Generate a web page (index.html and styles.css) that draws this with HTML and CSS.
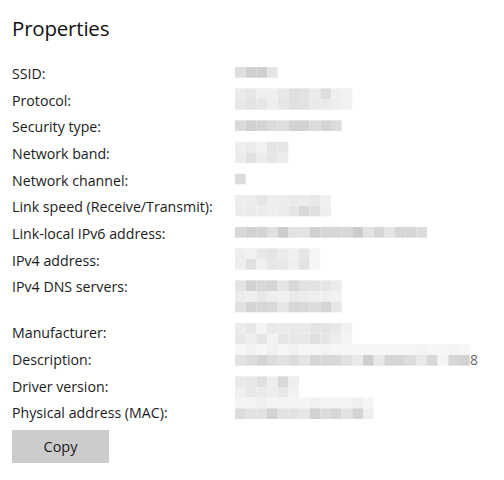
FILE: index.html
```html
<!DOCTYPE html>
<html lang="en">
<head>
<meta charset="utf-8">
<title>Properties</title>
<link rel="stylesheet" href="styles.css">
</head>
<body>
<main class="panel">
  <h1 class="title">Properties</h1>
  <div class="props">
    <dl class="list">
      <dt>SSID:</dt><dd></dd>
      <dt>Protocol:</dt><dd></dd>
      <dt>Security type:</dt><dd></dd>
      <dt>Network band:</dt><dd></dd>
      <dt>Network channel:</dt><dd></dd>
      <dt>Link speed (Receive/Transmit):</dt><dd></dd>
      <dt>Link-local IPv6 address:</dt><dd></dd>
      <dt>IPv4 address:</dt><dd></dd>
      <dt>IPv4 DNS servers:</dt><dd class="multi"><span class="line"></span><span class="line"></span></dd>
      <dt>Manufacturer:</dt><dd></dd>
      <dt>Description:</dt><dd class="desc"><span class="redacted"></span>8</dd>
      <dt>Driver version:</dt><dd></dd>
      <dt>Physical address (MAC):</dt><dd></dd>
    </dl>
    <svg class="mosaic" viewBox="0 0 22 33" width="234.67" height="352" aria-hidden="true">
      <g transform="translate(0 0)">
        <rect class="c" x="0" fill="#dedede"/><rect class="c" x="1" fill="#d0d0d0"/><rect class="c" x="2" fill="#cfcfcf"/><rect class="c" x="3" fill="#e4e4e4"/>
      </g>
      <g transform="translate(0 2)">
        <rect class="c" x="0" fill="#ebebeb"/><rect class="c" x="1" fill="#e6e6e6"/><rect class="c" x="2" fill="#efefef"/><rect class="c" x="3" fill="#f0f0f0"/><rect class="c" x="4" fill="#e8e8e8"/><rect class="c" x="5" fill="#e0e0e0"/><rect class="c" x="6" fill="#e2e2e2"/><rect class="c" x="7" fill="#ececec"/><rect class="c" x="8" fill="#dedede"/><rect class="c" x="9" fill="#efefef"/><rect class="c" x="10" fill="#f2f2f2"/>
      </g>
      <g transform="translate(0 3)">
        <rect class="c" x="0" fill="#e8e8e8"/><rect class="c" x="1" fill="#e4e4e4"/><rect class="c" x="2" fill="#e6e6e6"/><rect class="c" x="3" fill="#eeeeee"/><rect class="c" x="4" fill="#e6e6e6"/><rect class="c" x="5" fill="#e0e0e0"/><rect class="c" x="6" fill="#e2e2e2"/><rect class="c" x="7" fill="#eaeaea"/><rect class="c" x="8" fill="#eaeaea"/><rect class="c" x="9" fill="#eeeeee"/><rect class="c" x="10" fill="#f2f2f2"/>
      </g>
      <g transform="translate(0 5)">
        <rect class="c" x="0" fill="#dadada"/><rect class="c" x="1" fill="#cfcfcf"/><rect class="c" x="2" fill="#d4d4d4"/><rect class="c" x="3" fill="#dcdcdc"/><rect class="c" x="4" fill="#dedede"/><rect class="c" x="5" fill="#d2d2d2"/><rect class="c" x="6" fill="#d2d2d2"/><rect class="c" x="7" fill="#dcdcdc"/><rect class="c" x="8" fill="#d4d4d4"/><rect class="c" x="9" fill="#dcdcdc"/>
      </g>
      <g transform="translate(0 7)">
        <rect class="c" x="0" fill="#eeeeee"/><rect class="c" x="1" fill="#ebebeb"/><rect class="c" x="2" fill="#f2f2f2"/><rect class="c" x="3" fill="#e4e4e4"/><rect class="c" x="4" fill="#e6e6e6"/>
      </g>
      <g transform="translate(0 8)">
        <rect class="c" x="0" fill="#ececec"/><rect class="c" x="1" fill="#e2e2e2"/><rect class="c" x="2" fill="#ececec"/><rect class="c" x="3" fill="#e6e6e6"/><rect class="c" x="4" fill="#ececec"/>
      </g>
      <g transform="translate(0 10)">
        <rect class="c" x="0" fill="#dcdcdc"/>
      </g>
      <g transform="translate(0 12)">
        <rect class="c" x="0" fill="#eeeeee"/><rect class="c" x="1" fill="#ececec"/><rect class="c" x="2" fill="#e6e6e6"/><rect class="c" x="3" fill="#eeeeee"/><rect class="c" x="4" fill="#ececec"/><rect class="c" x="5" fill="#eaeaea"/><rect class="c" x="6" fill="#ececec"/><rect class="c" x="7" fill="#e8e8e8"/><rect class="c" x="8" fill="#f0f0f0"/>
      </g>
      <g transform="translate(0 13)">
        <rect class="c" x="0" fill="#ececec"/><rect class="c" x="1" fill="#eaeaea"/><rect class="c" x="2" fill="#ececec"/><rect class="c" x="3" fill="#eeeeee"/><rect class="c" x="4" fill="#ececec"/><rect class="c" x="5" fill="#e6e6e6"/><rect class="c" x="6" fill="#d8d8d8"/><rect class="c" x="7" fill="#e0e0e0"/><rect class="c" x="8" fill="#eeeeee"/>
      </g>
      <g transform="translate(0 15)">
        <rect class="c" x="0" fill="#d8d8d8"/><rect class="c" x="1" fill="#d2d2d2"/><rect class="c" x="2" fill="#d4d4d4"/><rect class="c" x="3" fill="#e0e0e0"/><rect class="c" x="4" fill="#cccccc"/><rect class="c" x="5" fill="#e2e2e2"/><rect class="c" x="6" fill="#e4e4e4"/><rect class="c" x="7" fill="#d0d0d0"/><rect class="c" x="8" fill="#d6d6d6"/><rect class="c" x="9" fill="#d6d6d6"/><rect class="c" x="10" fill="#d8d8d8"/><rect class="c" x="11" fill="#cccccc"/><rect class="c" x="12" fill="#e2e2e2"/><rect class="c" x="13" fill="#d6d6d6"/><rect class="c" x="14" fill="#e4e4e4"/><rect class="c" x="15" fill="#d6d6d6"/><rect class="c" x="16" fill="#d6d6d6"/><rect class="c" x="17" fill="#dcdcdc"/>
      </g>
      <g transform="translate(0 17)">
        <rect class="c" x="0" fill="#eeeeee"/><rect class="c" x="1" fill="#f2f2f2"/><rect class="c" x="2" fill="#e8e8e8"/><rect class="c" x="3" fill="#e4e4e4"/><rect class="c" x="4" fill="#ebebeb"/><rect class="c" x="5" fill="#f0f0f0"/><rect class="c" x="6" fill="#e6e6e6"/><rect class="c" x="7" fill="#f6f6f6"/>
      </g>
      <g transform="translate(0 18)">
        <rect class="c" x="0" fill="#eeeeee"/><rect class="c" x="1" fill="#e0e0e0"/><rect class="c" x="2" fill="#f0f0f0"/><rect class="c" x="3" fill="#e6e6e6"/><rect class="c" x="4" fill="#e8e8e8"/><rect class="c" x="5" fill="#eeeeee"/><rect class="c" x="6" fill="#e2e2e2"/><rect class="c" x="7" fill="#f6f6f6"/>
      </g>
      <g transform="translate(0 20)">
        <rect class="c" x="0" fill="#e4e4e4"/><rect class="c" x="1" fill="#d2d2d2"/><rect class="c" x="2" fill="#d8d8d8"/><rect class="c" x="3" fill="#d4d4d4"/><rect class="c" x="4" fill="#e4e4e4"/><rect class="c" x="5" fill="#d8d8d8"/><rect class="c" x="6" fill="#e2e2e2"/><rect class="c" x="7" fill="#e2e2e2"/><rect class="c" x="8" fill="#e6e6e6"/><rect class="c" x="9" fill="#ececec"/>
      </g>
      <g transform="translate(0 21)">
        <rect class="c" x="0" fill="#ececec"/><rect class="c" x="1" fill="#f0f0f0"/><rect class="c" x="2" fill="#e8e8e8"/><rect class="c" x="3" fill="#eeeeee"/><rect class="c" x="4" fill="#f0f0f0"/><rect class="c" x="5" fill="#eaeaea"/><rect class="c" x="6" fill="#ececec"/><rect class="c" x="7" fill="#eeeeee"/><rect class="c" x="8" fill="#f0f0f0"/><rect class="c" x="9" fill="#f2f2f2"/>
      </g>
      <g transform="translate(0 22)">
        <rect class="c" x="0" fill="#e2e2e2"/><rect class="c" x="1" fill="#d4d4d4"/><rect class="c" x="2" fill="#d6d6d6"/><rect class="c" x="3" fill="#d8d8d8"/><rect class="c" x="4" fill="#e6e6e6"/><rect class="c" x="5" fill="#d6d6d6"/><rect class="c" x="6" fill="#d8d8d8"/><rect class="c" x="7" fill="#dcdcdc"/><rect class="c" x="8" fill="#d4d4d4"/><rect class="c" x="9" fill="#e6e6e6"/>
      </g>
      <g transform="translate(0 24)">
        <rect class="c" x="0" fill="#ececec"/><rect class="c" x="1" fill="#e6e6e6"/><rect class="c" x="2" fill="#f4f4f4"/><rect class="c" x="3" fill="#e8e8e8"/><rect class="c" x="4" fill="#eaeaea"/><rect class="c" x="5" fill="#eaeaea"/><rect class="c" x="6" fill="#eaeaea"/><rect class="c" x="7" fill="#e4e4e4"/><rect class="c" x="8" fill="#e4e4e4"/><rect class="c" x="9" fill="#e8e8e8"/><rect class="c" x="10" fill="#f2f2f2"/>
      </g>
      <g transform="translate(0 25)">
        <rect class="c" x="0" fill="#e8e8e8"/><rect class="c" x="1" fill="#eeeeee"/><rect class="c" x="2" fill="#e6e6e6"/><rect class="c" x="3" fill="#f2f2f2"/><rect class="c" x="4" fill="#e6e6e6"/><rect class="c" x="5" fill="#e8e8e8"/><rect class="c" x="6" fill="#e8e8e8"/><rect class="c" x="7" fill="#e0e0e0"/><rect class="c" x="8" fill="#e6e6e6"/><rect class="c" x="9" fill="#eeeeee"/><rect class="c" x="10" fill="#f4f4f4"/>
      </g>
      <g transform="translate(0 26)">
        <rect x="0" y="0" width="22" height="1" fill="#f6f6f6"/>
        <rect class="c" x="1" fill="#f2f2f2"/><rect class="c" x="3" fill="#f1f1f1"/><rect class="c" x="5" fill="#f2f2f2"/><rect class="c" x="8" fill="#f3f3f3"/><rect class="c" x="17" fill="#f3f3f3"/><rect class="c" x="20" fill="#f3f3f3"/>
      </g>
      <g transform="translate(0 27)">
        <rect class="c" x="0" fill="#e2e2e2"/><rect class="c" x="1" fill="#dcdcdc"/><rect class="c" x="2" fill="#d4d4d4"/><rect class="c" x="3" fill="#dcdcdc"/><rect class="c" x="4" fill="#e2e2e2"/><rect class="c" x="5" fill="#dcdcdc"/><rect class="c" x="6" fill="#e4e4e4"/><rect class="c" x="7" fill="#d6d6d6"/><rect class="c" x="8" fill="#d8d8d8"/><rect class="c" x="9" fill="#d8d8d8"/><rect class="c" x="10" fill="#e0e0e0"/><rect class="c" x="11" fill="#e8e8e8"/><rect class="c" x="12" fill="#cecece"/><rect class="c" x="13" fill="#e8e8e8"/><rect class="c" x="14" fill="#d6d6d6"/><rect class="c" x="15" fill="#d6d6d6"/><rect class="c" x="16" fill="#dcdcdc"/><rect class="c" x="17" fill="#e8e8e8"/><rect class="c" x="18" fill="#d8d8d8"/><rect class="c" x="19" fill="#f4f4f4"/><rect class="c" x="20" fill="#d6d6d6"/><rect class="c" x="21" fill="#d2d2d2"/>
      </g>
      <g transform="translate(0 29)">
        <rect class="c" x="0" fill="#eaeaea"/><rect class="c" x="1" fill="#e8e8e8"/><rect class="c" x="2" fill="#e0e0e0"/><rect class="c" x="3" fill="#eeeeee"/><rect class="c" x="4" fill="#d8d8d8"/><rect class="c" x="5" fill="#eeeeee"/>
      </g>
      <g transform="translate(0 30)">
        <rect class="c" x="0" fill="#f0f0f0"/><rect class="c" x="1" fill="#e8e8e8"/><rect class="c" x="2" fill="#eaeaea"/><rect class="c" x="3" fill="#eeeeee"/><rect class="c" x="4" fill="#e8e8e8"/><rect class="c" x="5" fill="#f2f2f2"/>
      </g>
      <g transform="translate(0 31)">
        <rect x="0" y="0" width="13" height="1" fill="#f4f4f4"/>
        <rect class="c" x="2" fill="#f0f0f0"/><rect class="c" x="7" fill="#f1f1f1"/><rect class="c" x="11" fill="#efefef"/>
      </g>
      <g transform="translate(0 32)">
        <rect class="c" x="0" fill="#dcdcdc"/><rect class="c" x="1" fill="#e2e2e2"/><rect class="c" x="2" fill="#e2e2e2"/><rect class="c" x="3" fill="#d4d4d4"/><rect class="c" x="4" fill="#e2e2e2"/><rect class="c" x="5" fill="#e2e2e2"/><rect class="c" x="6" fill="#e6e6e6"/><rect class="c" x="7" fill="#d2d2d2"/><rect class="c" x="8" fill="#dcdcdc"/><rect class="c" x="9" fill="#d6d6d6"/><rect class="c" x="10" fill="#e2e2e2"/><rect class="c" x="11" fill="#d4d4d4"/><rect class="c" x="12" fill="#eeeeee"/>
      </g>
    </svg>
  </div>
  <button class="copy" type="button">Copy</button>
</main>
</body>
</html>
```
FILE: styles.css
```css
html, body {
  margin: 0;
  background: #ffffff;
}

body {
  font-family: "Open Sans", "Noto Sans", sans-serif;
  color: #1b1b1b;
}

.panel {
  padding: 8px 12px 0;
}

.title {
  margin: 0;
  font-size: 20.5px;
  font-weight: 400;
  letter-spacing: -0.2px;
  line-height: 40px;
  color: #111;
}

.props {
  position: relative;
  margin-top: 13px;
}

.list {
  display: grid;
  grid-template-columns: 223px 1fr;
  margin: 0;
  font-size: 14.2px;
  line-height: 26.667px;
}

.list dt,
.list dd {
  margin: 0;
  white-space: nowrap;
}

.multi {
  display: flex;
  flex-direction: column;
}

.multi .line {
  height: 23px;
}

.desc {
  color: #6b6b6b;
  font-size: 14px;
}

.redacted {
  display: inline-block;
  width: 235px;
}

.mosaic {
  position: absolute;
  left: 223px;
  top: 6px;
}

.mosaic .c {
  y: 0;
  width: 1px;
  height: 1px;
}

.copy {
  margin-top: 3px;
  width: 97px;
  height: 33px;
  border: none;
  background: #cccccc;
  font-family: inherit;
  font-size: 14.5px;
  color: #1b1b1b;
  padding: 0;
}
```
